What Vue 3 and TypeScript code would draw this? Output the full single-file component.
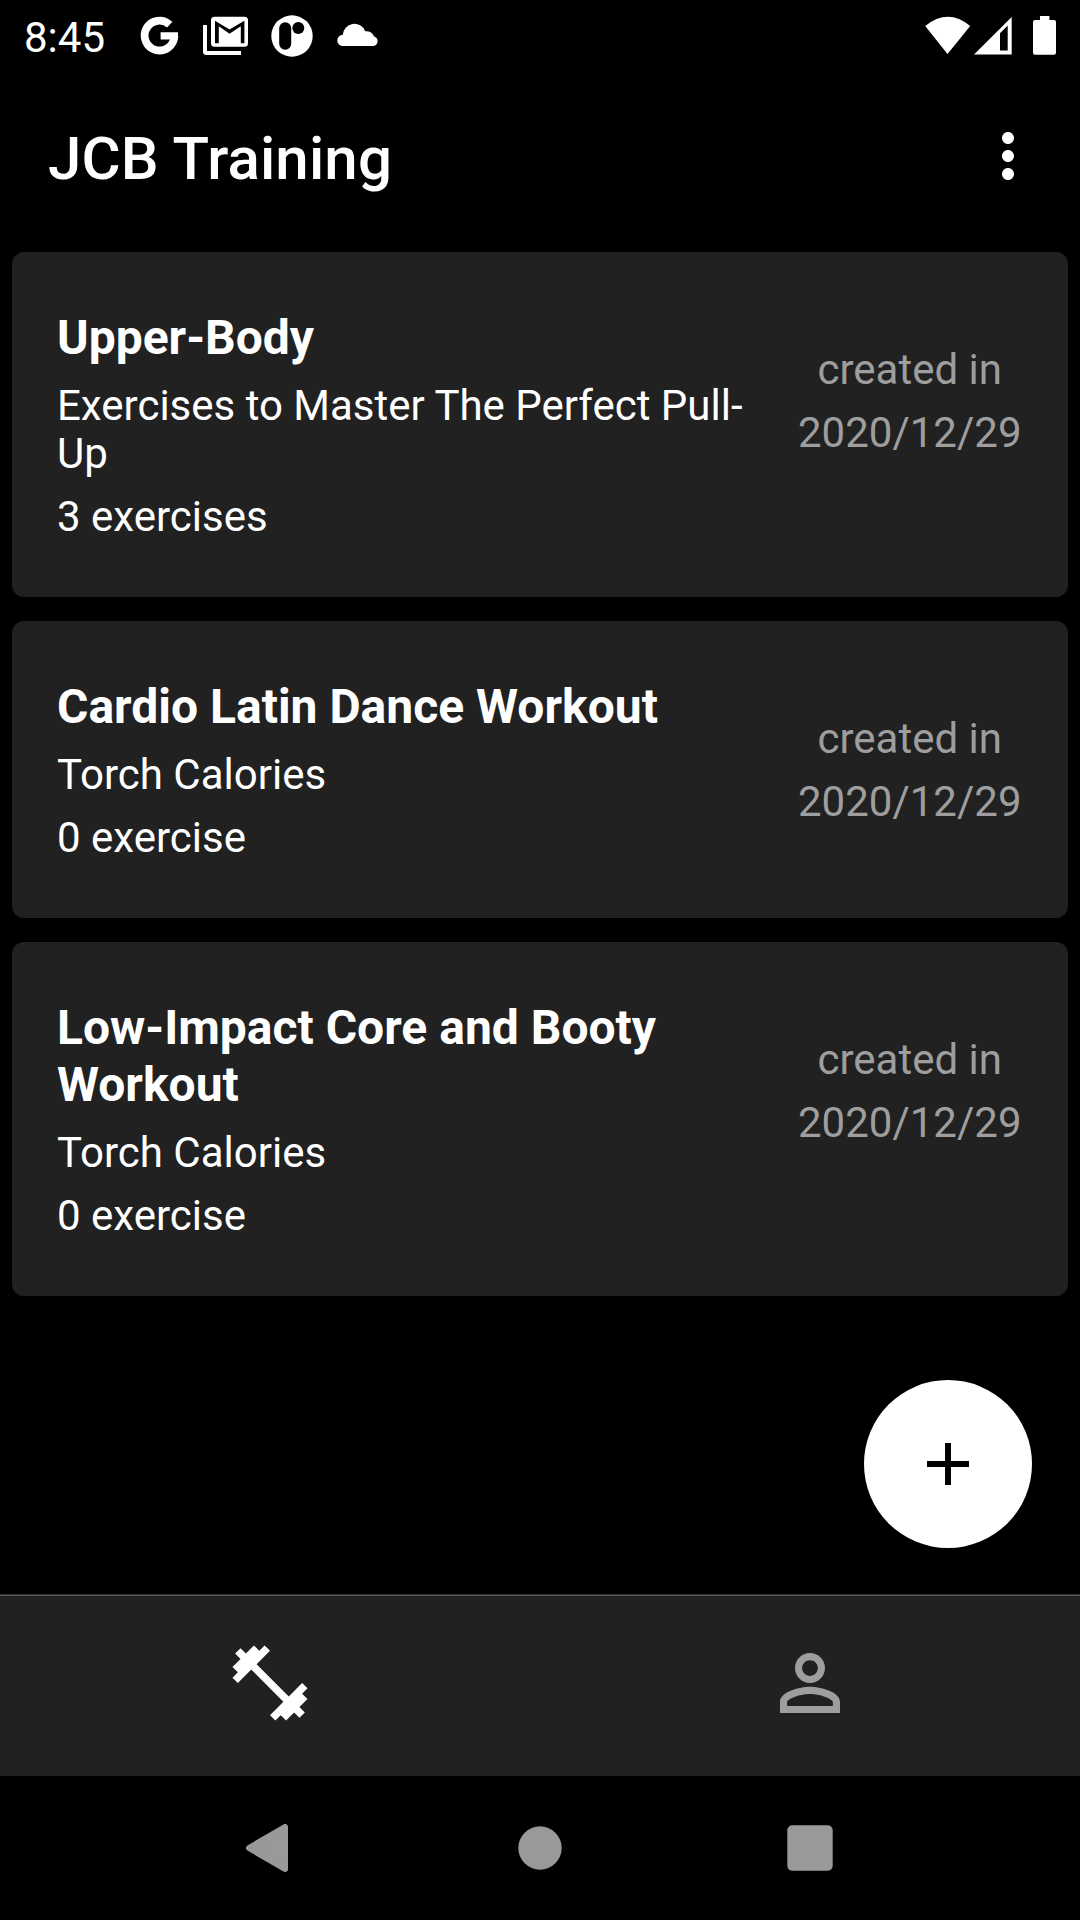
<script setup lang="ts">
interface Workout {
  title: string
  description: string
  exercises: string
  date: string
}

const workouts: Workout[] = [
  {
    title: 'Upper-Body',
    description: 'Exercises to Master The Perfect Pull-Up',
    exercises: '3 exercises',
    date: '2020/12/29',
  },
  {
    title: 'Cardio Latin Dance Workout',
    description: 'Torch Calories',
    exercises: '0 exercise',
    date: '2020/12/29',
  },
  {
    title: 'Low-Impact Core and Booty Workout',
    description: 'Torch Calories',
    exercises: '0 exercise',
    date: '2020/12/29',
  },
]
</script>

<template>
  <div class="screen">
    <div class="status-bar">
      <span class="clock">8:45</span>
      <div class="notifications">
        <svg class="status-icon" viewBox="136 12 48 48">
          <path d="M169.7 24.7A14.9 14.9 0 1 0 174.4 36" fill="none" stroke="#fff" stroke-width="7.8" />
          <path d="M160.6 32.3H178V36L174 39.4H160.6z" fill="#fff" />
        </svg>
        <svg class="status-icon" viewBox="202 12 48 48">
          <path d="M203 25h4v26h34v4h-34.5a3.5 3.5 0 0 1-3.5-3.5z" fill="#fff" />
          <path
            fill="#fff"
            fill-rule="evenodd"
            d="M214.5 16.8h30a3.5 3.5 0 0 1 3.5 3.5v23a3.5 3.5 0 0 1-3.5 3.5h-30a3.5 3.5 0 0 1-3.5-3.5v-23a3.5 3.5 0 0 1 3.5-3.5zM215 20.7v22.6h3.8V26.2l10.7 7.5 11.3-7.5v17.1h3.6V20.7L229.5 29.6z"
          />
        </svg>
        <svg class="status-icon" viewBox="268 12 48 48">
          <circle cx="292" cy="36" r="20.7" fill="#fff" />
          <rect x="279.2" y="22.2" width="12" height="27.6" rx="6" fill="#000" />
          <circle cx="298.3" cy="28" r="6" fill="#000" />
        </svg>
        <svg class="status-icon" viewBox="334 12 48 48">
          <path
            fill="#fff"
            d="M343 46a5.6 5.6 0 0 1-.2-11.2A11.6 11.6 0 0 1 365.2 31.2a9 9 0 0 1 9 5.2A5 5 0 0 1 373.8 46z"
          />
        </svg>
      </div>
      <svg class="system-icons" viewBox="920 12 142 48">
        <path d="M925.2 26Q948 7.6 970.2 26L947.5 54z" fill="#fff" />
        <path d="M974 54.4 1011.7 17V54.4zM1000 33.3V50.4H1007.7V25.6z" fill="#fff" fill-rule="evenodd" />
        <path
          d="M1040 16h9.4v4h4.6a2 2 0 0 1 2 2v30.7a2 2 0 0 1-2 2h-19a2 2 0 0 1-2-2V22a2 2 0 0 1 2-2h5z"
          fill="#fff"
        />
      </svg>
    </div>

    <header class="app-bar">
      <h1 class="app-title">JCB Training</h1>
      <svg class="more" viewBox="0 0 24 24">
        <path
          fill="#fff"
          d="M12 8c1.1 0 2-.9 2-2s-.9-2-2-2-2 .9-2 2 .9 2 2 2zm0 2c-1.1 0-2 .9-2 2s.9 2 2 2 2-.9 2-2-.9-2-2-2zm0 6c-1.1 0-2 .9-2 2s.9 2 2 2 2-.9 2-2-.9-2-2-2z"
        />
      </svg>
    </header>

    <main class="list">
      <article v-for="workout in workouts" :key="workout.title" class="card">
        <div class="details">
          <h2 class="title">{{ workout.title }}</h2>
          <p class="text">{{ workout.description }}</p>
          <p class="text">{{ workout.exercises }}</p>
        </div>
        <div class="created">
          <p class="text">created in</p>
          <p class="text">{{ workout.date }}</p>
        </div>
      </article>
      <button class="fab" type="button" aria-label="Add">
        <svg viewBox="0 0 24 24"><path d="M19 13h-6v6h-2v-6H5v-2h6V5h2v6h6z" fill="#000" /></svg>
      </button>
    </main>

    <nav class="tabs">
      <div class="tab">
        <svg viewBox="0 0 24 24">
          <path
            fill="#fff"
            d="M20.57 14.86L22 13.43 20.57 12 17 15.57 8.43 7 12 3.43 10.57 2 9.14 3.43 7.71 2 5.57 4.14 4.14 2.71 2.71 4.14l1.43 1.43L2 7.71l1.43 1.43L2 10.57 3.43 12 7 8.43 15.57 17 12 20.57 13.43 22l1.43-1.43L16.29 22l2.14-2.14 1.43 1.43 1.43-1.43-1.43-1.43L22 16.29z"
          />
        </svg>
      </div>
      <div class="tab">
        <svg viewBox="0 0 24 24">
          <path
            fill="#9e9e9e"
            fill-rule="evenodd"
            d="M12 4C9.79 4 8 5.79 8 8s1.79 4 4 4 4-1.79 4-4-1.79-4-4-4zm0 1.9c1.16 0 2.1.94 2.1 2.1s-.94 2.1-2.1 2.1S9.9 9.16 9.9 8s.94-2.1 2.1-2.1zM12 13c-2.67 0-8 1.34-8 4v3h16v-3c0-2.66-5.33-4-8-4zm0 1.9c2.97 0 6.1 1.46 6.1 2.1v1.1H5.9V17c0-.64 3.13-2.1 6.1-2.1z"
          />
        </svg>
      </div>
    </nav>

    <div class="system-nav">
      <svg viewBox="0 0 60 60">
        <path
          d="M9 30 45 9V51z"
          fill="#999"
          stroke="#999"
          stroke-width="6"
          stroke-linejoin="round"
        />
      </svg>
      <svg viewBox="0 0 60 60"><circle cx="30" cy="30" r="21.7" fill="#999" /></svg>
      <svg viewBox="0 0 60 60"><rect x="7.3" y="7.3" width="45.4" height="45.4" rx="5" fill="#999" /></svg>
    </div>
  </div>
</template>

<style>
body {
  margin: 0;
  background: #000;
}
</style>

<style scoped>
.screen {
  width: 1080px;
  height: 1920px;
  display: flex;
  flex-direction: column;
  overflow: hidden;
  background: #000;
  color: #fff;
  font-family: Roboto, sans-serif;
}

svg {
  display: block;
  flex: none;
}

h1,
h2,
p {
  margin: 0;
}

.status-bar {
  height: 72px;
  box-sizing: border-box;
  padding: 0 18px 0 24px;
  display: flex;
  align-items: center;
}

.clock {
  width: 112px;
  padding-top: 4px;
  font-size: 42px;
  line-height: 50px;
}

.notifications {
  flex: 1;
  display: flex;
  gap: 18px;
}

.status-icon {
  width: 48px;
  height: 48px;
}

.system-icons {
  width: 142px;
  height: 48px;
}

.app-bar {
  height: 168px;
  box-sizing: border-box;
  padding: 0 36px 0 48px;
  display: flex;
  align-items: center;
  justify-content: space-between;
}

.app-title {
  padding-top: 6px;
  font-size: 60px;
  line-height: 70px;
  font-weight: 500;
  letter-spacing: 0.15px;
}

.more {
  width: 72px;
  height: 72px;
}

.list {
  flex: 1;
  padding: 12px 12px 0;
  display: flex;
  flex-direction: column;
  gap: 24px;
  position: relative;
}

.card {
  box-sizing: border-box;
  padding: 57px 46.5px 56px 45px;
  display: flex;
  justify-content: space-between;
  background: #212121;
  border-radius: 12px;
}

.details {
  width: 699px;
  display: flex;
  flex-direction: column;
}

.title {
  margin-bottom: 16px;
  font-size: 48px;
  line-height: 57px;
  font-weight: 700;
}

.text {
  font-size: 42px;
  line-height: 48px;
}

.text + .text {
  margin-top: 15px;
}

.created {
  padding-top: 37px;
  text-align: center;
  color: #9e9e9e;
}

.fab {
  position: absolute;
  right: 48px;
  bottom: 46px;
  width: 168px;
  height: 168px;
  padding: 0;
  border: 0;
  border-radius: 50%;
  display: flex;
  align-items: center;
  justify-content: center;
  background: #fff;
}

.fab svg {
  width: 72px;
  height: 72px;
}

.tabs {
  height: 182px;
  box-sizing: border-box;
  padding-bottom: 5px;
  border-top: 1px solid #303030;
  box-shadow: inset 0 1px #5a5a5a;
  display: flex;
  background: #212121;
}

.tab {
  flex: 1;
  display: flex;
  align-items: center;
  justify-content: center;
}

.tab svg {
  width: 90px;
  height: 90px;
}

.system-nav {
  height: 144px;
  padding: 0 135px;
  display: flex;
  align-items: center;
  justify-content: space-around;
}

.system-nav svg {
  width: 60px;
  height: 60px;
}
</style>
